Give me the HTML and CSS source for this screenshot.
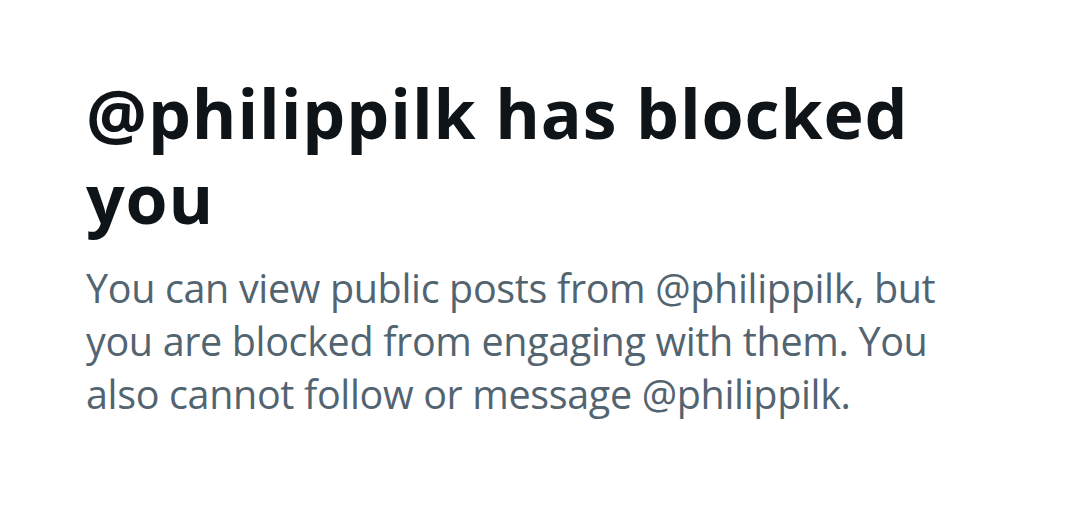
FILE: index.html
```html
<!DOCTYPE html>
<html lang="en">
<head>
<meta charset="utf-8">
<title>Blocked</title>
<link rel="stylesheet" href="styles.css">
</head>
<body>
<main class="notice">
  <h1 class="notice-title">@philippilk has blocked you</h1>
  <p class="notice-text">You can view public posts from @philippilk, but you are blocked from engaging with them. You also cannot follow or message @philippilk.</p>
</main>
</body>
</html>
```
FILE: styles.css
```css
html, body {
  margin: 0;
  padding: 0;
  background: #ffffff;
}
body {
  width: 1080px;
  height: 510px;
  overflow: hidden;
}
.notice {
  padding: 70px 0 0 86px;
  width: 870px;
}
.notice-title {
  margin: 0;
  width: 860px;
  font-family: "Open Sans", "Liberation Sans", sans-serif;
  font-weight: 700;
  font-size: 68px;
  line-height: 85px;
  letter-spacing: 0.9px;
  color: #0f1419;
}
.notice-text {
  margin: 22px 0 0;
  font-family: "Open Sans", "Liberation Sans", sans-serif;
  font-weight: 400;
  font-size: 39.5px;
  line-height: 53px;
  letter-spacing: -0.35px;
  color: #536471;
}
```
